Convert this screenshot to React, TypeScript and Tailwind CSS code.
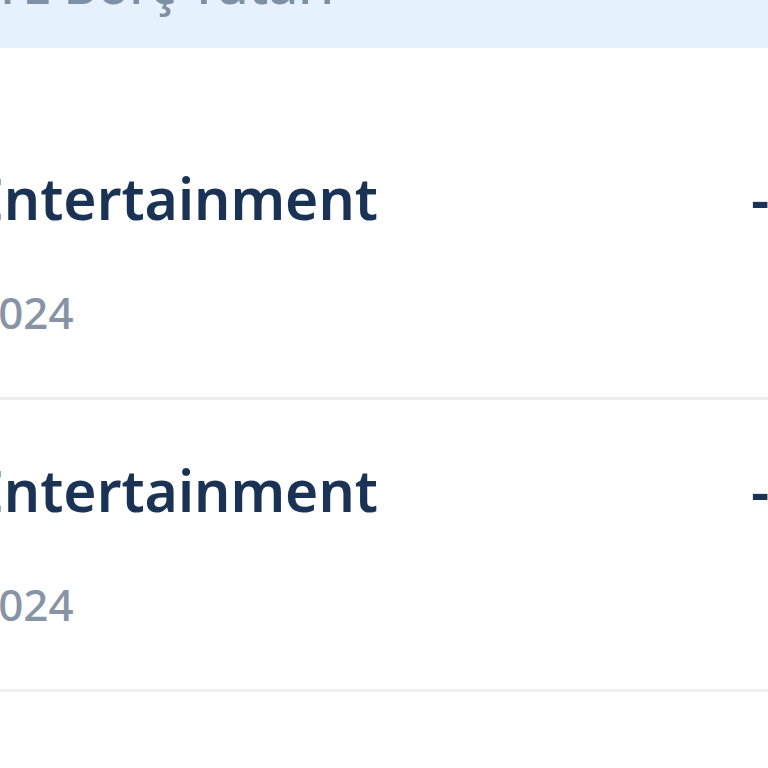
import React from 'react';

type Txn = {
  id: number;
  category: string;
  date: string;
  amount: string;
};

const transactions: Txn[] = [
  { id: 1, category: 'Entertainment', date: '2024', amount: '-₺450,00' },
  { id: 2, category: 'Entertainment', date: '2024', amount: '-₺120,00' },
];

export default function App() {
  return (
    <div
      className="w-[768px] h-[768px] overflow-hidden bg-white"
      style={{ fontFamily: '"Noto Sans", "Open Sans", sans-serif' }}
    >
      <div className="ml-[-28px] w-[900px]">
        {/* Özet bandı */}
        <div className="-mt-[92px] h-[140px] bg-[#e5f1fd] pt-[41px] pl-[21px]">
          <p className="text-[52px] leading-[70px] font-medium text-[#7f90a4] whitespace-nowrap">
            TL Borç Tutarı
          </p>
        </div>

        {/* Hareketler */}
        <div className="mt-[60px]">
          {transactions.map((t) => (
            <div key={t.id} className="flex items-start border-b-[3px] border-[#eeeeee] pt-[50px] pb-[55px]">
              <div className="w-[779px] shrink-0">
                <p className="text-[57px] leading-[80px] font-semibold text-[#1a3354] whitespace-nowrap">
                  {t.category}
                </p>
                <p className="mt-[44px] pl-[1px] text-[44px] leading-[60px] font-medium text-[#8794a6] whitespace-nowrap">
                  {t.date}
                </p>
              </div>
              <p className="text-[57px] leading-[80px] font-semibold text-[#1a3354] whitespace-nowrap">
                {t.amount}
              </p>
            </div>
          ))}
        </div>
      </div>
    </div>
  );
}
